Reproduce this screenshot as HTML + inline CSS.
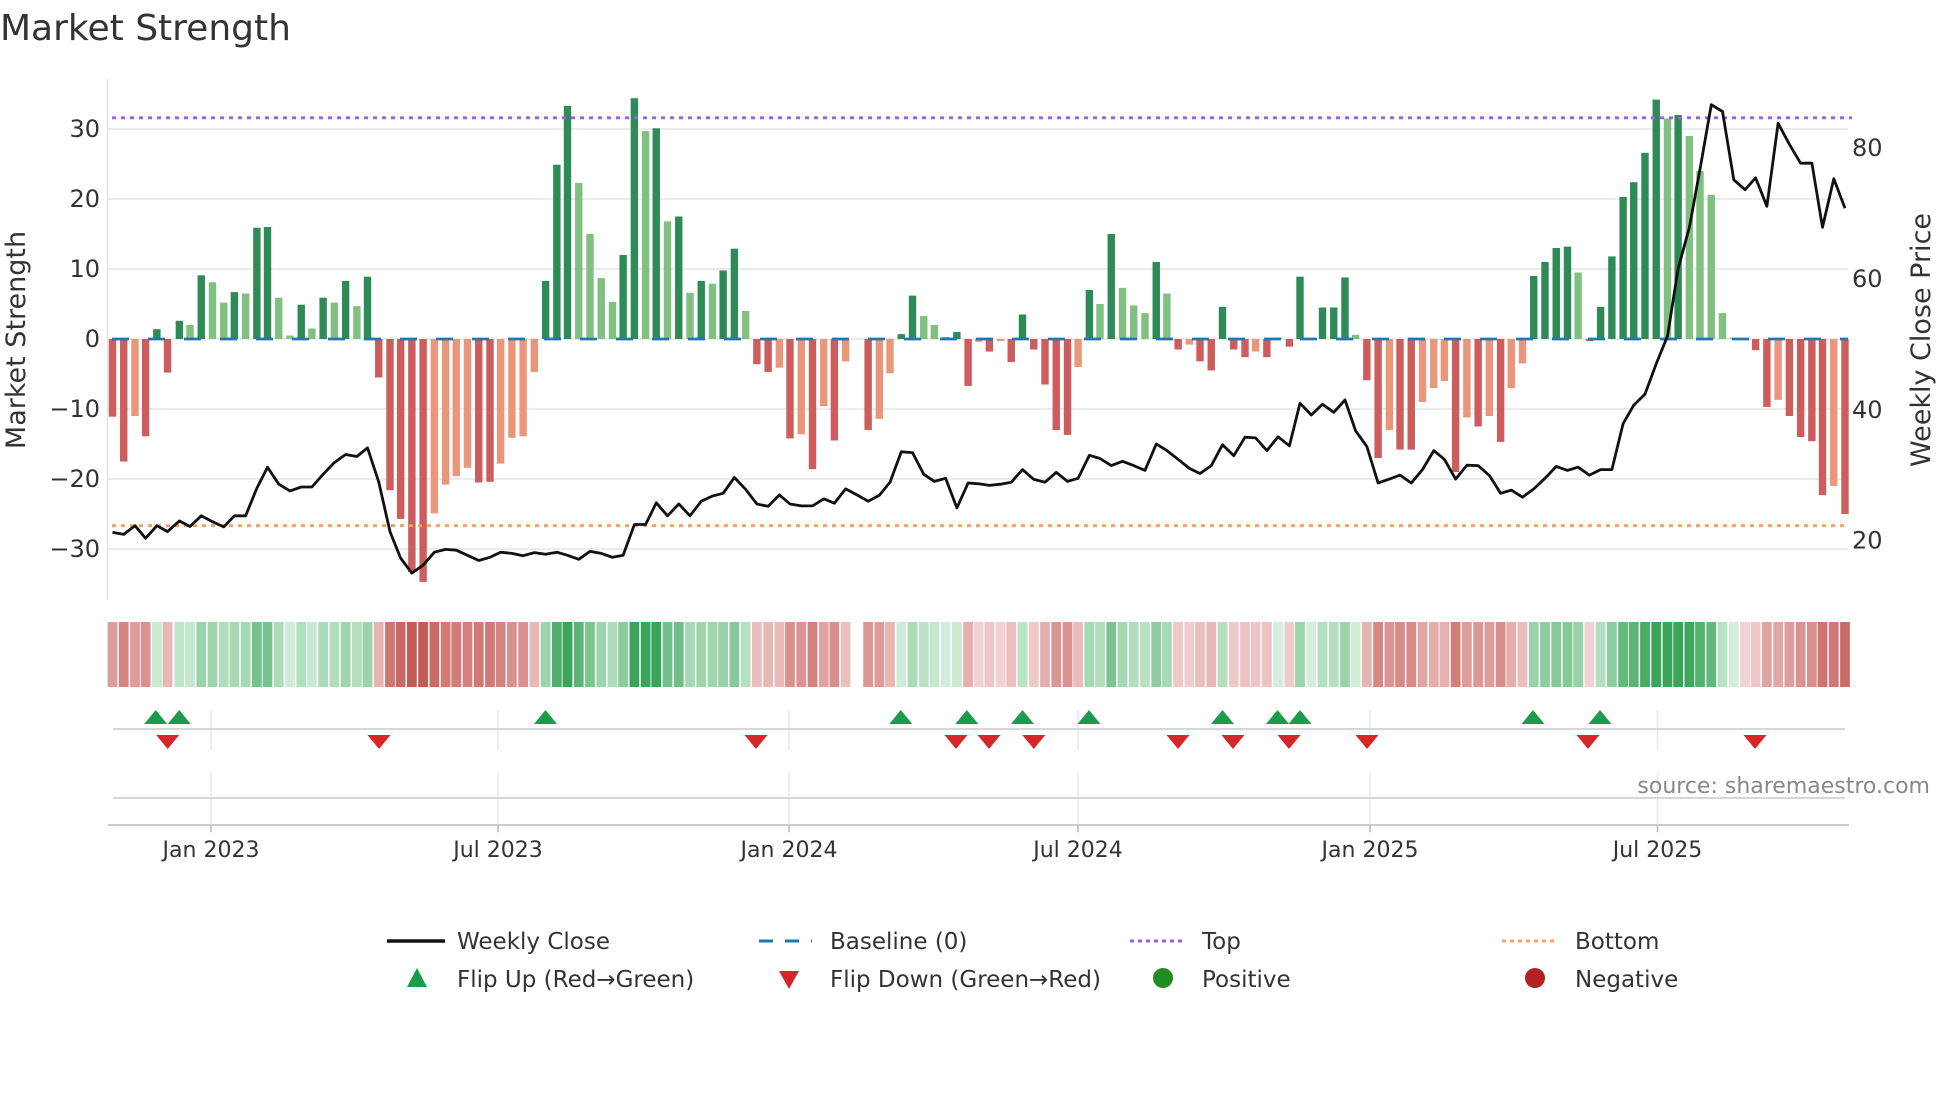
<!DOCTYPE html>
<html><head><meta charset="utf-8"><style>
html,body{margin:0;padding:0;background:#fff;width:1960px;height:1102px;overflow:hidden}
svg{display:block;font-family:"DejaVu Sans","Liberation Sans",sans-serif}
</style></head><body>
<svg id="s" width="1960" height="1102" viewBox="0 0 1960 1102" xmlns="http://www.w3.org/2000/svg">
<text x="0" y="40" font-size="36" fill="#333">Market Strength</text>
<g id="grid" stroke="#ececec" stroke-width="2"></g>
<line x1="107.5" y1="79" x2="107.5" y2="600" stroke="#e2e2e2" stroke-width="1.5"/>
<g id="bars"></g>
<g id="ticks" font-size="24" fill="#333"></g>
<text transform="translate(25,340) rotate(-90)" text-anchor="middle" font-size="27" fill="#333">Market Strength</text>
<text transform="translate(1930,340) rotate(-90)" text-anchor="middle" font-size="27" fill="#333">Weekly Close Price</text>
<g id="strip"></g>
<g id="marks"></g>
<text x="1930" y="801" text-anchor="end" font-size="22" fill="#888" transform="translate(0,-8)">source: sharemaestro.com</text>
<g id="legend" font-size="23" fill="#333">
<line x1="387" y1="941" x2="445" y2="941" stroke="#111" stroke-width="3.5"/>
<text x="457" y="949">Weekly Close</text>
<line x1="759" y1="941" x2="812" y2="941" stroke="#1f77b4" stroke-width="3" stroke-dasharray="14 12"/>
<text x="830" y="949">Baseline (0)</text>
<line x1="1130" y1="941" x2="1185" y2="941" stroke="#9b5fe0" stroke-width="3" stroke-dasharray="4 4"/>
<text x="1202" y="949">Top</text>
<line x1="1502" y1="941" x2="1558" y2="941" stroke="#f4a46a" stroke-width="3" stroke-dasharray="4 4"/>
<text x="1575" y="949">Bottom</text>
<polygon points="417,968 407,987 427,987" fill="#1a9c4a"/>
<text x="457" y="987">Flip Up (Red→Green)</text>
<polygon points="789,989 779,971 799,971" fill="#d62728"/>
<text x="830" y="987">Flip Down (Green→Red)</text>
<circle cx="1163" cy="978" r="10" fill="#228b22"/>
<text x="1202" y="987">Positive</text>
<circle cx="1535" cy="978" r="10" fill="#b22222"/>
<text x="1575" y="987">Negative</text>
</g>
</svg>
<script>
var NS="http://www.w3.org/2000/svg";
function el(p,t,a,txt){var e=document.createElementNS(NS,t);for(var k in a)e.setAttribute(k,a[k]);if(txt!=null)e.textContent=txt;document.getElementById(p).appendChild(e);return e;}
var b1=[[180,-11.1,'r'],[198,-17.5,'r'],[216,-11,'s'],[233,-13.9,'r'],[251,1.4,'d'],[268,-4.8,'r'],[287,2.6,'d'],[304,2,'l'],[322,9.1,'d'],[340,8.1,'l'],[358,5.2,'l'],[375,6.7,'d'],[393,6.5,'l'],[411,15.9,'d'],[428,16,'d'],[446,5.9,'l'],[464,0.5,'l'],[482,4.9,'d'],[499,1.5,'l'],[517,5.9,'d'],[535,5.2,'l'],[553,8.3,'d'],[571,4.7,'l'],[588,8.9,'d'],[606,-5.5,'r'],[624,-21.6,'r'],[641,-25.7,'r'],[659,-33.3,'r'],[677,-34.7,'r'],[695,-24.9,'s'],[713,-20.8,'s'],[730,-19.6,'s'],[748,-18.4,'s'],[766,-20.5,'r'],[784,-20.4,'r'],[801,-17.8,'s'],[819,-14.1,'s'],[837,-13.9,'s'],[855,-4.7,'s'],[873,8.3,'d'],[891,24.9,'d'],[908,33.3,'d'],[926,22.3,'l'],[944,15,'l'],[962,8.7,'l'],[980,5.3,'l'],[997,12,'d'],[1015,34.4,'d'],[1033,29.7,'l'],[1050,30.1,'d'],[1068,16.8,'l'],[1086,17.5,'d'],[1104,6.6,'l'],[1122,8.3,'d'],[1140,7.9,'l'],[1157,9.8,'d'],[1175,12.9,'d'],[1193,4,'l'],[1211,-3.6,'r'],[1229,-4.7,'r'],[1247,-4.1,'s'],[1264,-14.2,'r'],[1282,-13.6,'s'],[1300,-18.6,'r'],[1318,-9.6,'s'],[1335,-14.5,'r'],[1353,-3.2,'s'],[1371,0,'l'],[1389,-13,'r'],[1407,-11.4,'s'],[1424,-4.9,'s'],[1442,0.7,'d'],[1460,6.2,'d'],[1478,3.3,'l'],[1495,2,'l'],[1513,0.3,'l'],[1531,1,'d'],[1549,-6.7,'r'],[1566,-0.4,'s']];
var b2=[[15,-1.8,'r'],[33,-0.3,'s'],[50,-3.3,'r'],[68,3.5,'d'],[86,-1.5,'r'],[104,-6.5,'r'],[122,-13,'r'],[140,-13.7,'r'],[157,-4,'s'],[175,7,'d'],[192,5,'l'],[210,15,'d'],[228,7.3,'l'],[246,4.8,'l'],[264,3.7,'l'],[282,11,'d'],[299,6.5,'l'],[317,-1.5,'r'],[335,-0.8,'s'],[352,-3.2,'r'],[370,-4.5,'r'],[388,4.6,'d'],[406,-1.5,'r'],[424,-2.6,'r'],[441,-1.8,'s'],[459,-2.6,'r'],[477,0.2,'l'],[495,-1.1,'r'],[512,8.9,'d'],[530,0.1,'d'],[548,4.5,'d'],[566,4.5,'d'],[584,8.8,'d'],[601,0.6,'l'],[619,-5.9,'r'],[637,-17,'r'],[655,-13,'s'],[672,-15.8,'r'],[690,-15.8,'r'],[708,-9,'s'],[726,-7,'s'],[743,-6,'s'],[761,-19,'r'],[779,-11.2,'s'],[797,-12.5,'r'],[815,-11,'s'],[833,-14.7,'r'],[850,-7,'s'],[868,-3.5,'s'],[886,9,'d'],[904,11,'d'],[922,13,'d'],[940,13.2,'d'],[957,9.5,'l'],[975,-0.3,'r'],[993,4.6,'d'],[1011,11.8,'d'],[1029,20.3,'d'],[1046,22.4,'d'],[1064,26.6,'d'],[1082,34.2,'d'],[1100,31.5,'l'],[1117,32,'d'],[1135,29,'l'],[1152,24,'l'],[1170,20.6,'l'],[1188,3.7,'l'],[1206,0.2,'l'],[1224,-0.06,'r'],[1241,-1.6,'r'],[1259,-9.7,'r'],[1277,-8.7,'s'],[1295,-11,'r'],[1313,-14,'r'],[1331,-14.6,'r'],[1348,-22.3,'r'],[1366,-21,'s'],[1384,-25,'r']];
var p1=[1347,1352,1330,1362,1330,1345,1318,1332,1305,1320,1333,1305,1305,1235,1182,1225,1242,1232,1232,1200,1170,1150,1155,1133,1220,1345,1412,1450,1430,1397,1390,1392,1405,1418,1410,1397,1400,1406,1398,1402,1397,1405,1415,1395,1400,1410,1405,1327,1327,1272,1305,1275,1305,1268,1255,1248,1208,1238,1275,1281,1252,1275,1280,1280,1262,1273,1237,1252,1268,1253,1220,1143,1145,1200,1218,1210,1285,1222,1224];
var p2=[1228,1225,1220,1188,1213,1220,1195,1218,1210,1152,1160,1178,1167,1178,1190,1123,1140,1162,1185,1198,1178,1125,1153,1106,1108,1140,1105,1128,1020,1050,1023,1043,1012,1090,1130,1222,1212,1202,1222,1188,1140,1162,1212,1177,1178,1203,1248,1240,1258,1237,1210,1180,1190,1182,1202,1188,1188,1072,1025,997,920,850,680,575,428,265,282,455,480,450,522,312,365,413,413,575,452,527];
var bars=[],py=[];
b1.forEach(function(b){bars.push([b[0]/1.6,b[1],b[2]]);});
b2.forEach(function(b){bars.push([980+b[0]/1.6,b[1],b[2]]);});
p1.forEach(function(v){py.push(v/2.53);});p2.forEach(function(v){py.push(v/2.53);});
var Y0=339,K=7.0;
[-30,-20,-10,10,20,30].forEach(function(v){el('grid','line',{x1:108,x2:1848,y1:Y0-v*K,y2:Y0-v*K});});
el('grid','line',{x1:108,x2:1848,y1:Y0,y2:Y0});
[-30,-20,-10,0,10,20,30].forEach(function(v){el('ticks','text',{x:100,y:Y0-v*K+8,'text-anchor':'end'},(v<0?'\u2212'+(-v):''+v));});
[20,40,60,80].forEach(function(p){el('ticks','text',{x:1852,y:540.7-(p-20)*6.545+8},''+p);});
var col={d:'#2e8b57',l:'#80c080',r:'#cd5c5c',s:'#e9967a'};
bars.forEach(function(b){var v=b[1];if(Math.abs(v)<0.05)return;var h=Math.abs(v)*K;el('bars','rect',{x:b[0]-3.7,width:7.4,y:v>0?Y0-h:Y0,height:h,fill:col[b[2]]});});
el('bars','line',{x1:112,x2:1848,y1:Y0,y2:Y0,stroke:'#1f77b4','stroke-width':2.8,'stroke-dasharray':'17 19'});
el('bars','line',{x1:112,x2:1852,y1:117.8,y2:117.8,stroke:'#9b5fe0','stroke-width':2.8,'stroke-dasharray':'4 5'});
el('bars','line',{x1:112,x2:1848,y1:525.7,y2:525.7,stroke:'#f0a060','stroke-width':2.8,'stroke-dasharray':'4 5'});
var d='';for(var i=0;i<bars.length&&i<py.length;i++){d+=(i?'L':'M')+bars[i][0].toFixed(1)+' '+py[i].toFixed(1);}
el('bars','path',{d:d,fill:'none',stroke:'#111','stroke-width':2.8,'stroke-linejoin':'round'});
function mix(a,b,t){var r=[0,1,2].map(function(k){return Math.round(a[k]+(b[k]-a[k])*t);});return 'rgb('+r.join(',')+')';}
bars.forEach(function(b,i){var v=b[1];if(Math.abs(v)<0.01)return;var t=Math.min(Math.abs(v)/30,1);t=Math.pow(t,0.8);
var c=v>0?mix([214,239,220],[58,165,90],t):mix([242,212,212],[196,90,85],t);
el('strip','rect',{x:b[0]-4.9,width:9.8,y:622,height:65,fill:c});});
[211,498,789,1078,1370,1657.5].forEach(function(x){el('marks','line',{x1:x,x2:x,y1:710,y2:750,stroke:'#e6e9ee','stroke-width':1.5});el('marks','line',{x1:x,x2:x,y1:772,y2:833,stroke:'#e6e9ee','stroke-width':1.5});});
el('marks','line',{x1:113,x2:1845,y1:729,y2:729,stroke:'#d4d6da','stroke-width':2});
el('marks','line',{x1:113,x2:1845,y1:798,y2:798,stroke:'#d4d6da','stroke-width':2});
el('marks','line',{x1:108,x2:1849,y1:825,y2:825,stroke:'#ccc','stroke-width':2});
[[211,'Jan 2023'],[498,'Jul 2023'],[789,'Jan 2024'],[1078,'Jul 2024'],[1370,'Jan 2025'],[1657.5,'Jul 2025']].forEach(function(t){el('marks','line',{x1:t[0],x2:t[0],y1:825,y2:832,stroke:'#bbb','stroke-width':1.5});el('marks','text',{x:t[0],y:867,'text-anchor':'middle','font-size':22,fill:'#333',transform:'translate(0,-10)'},t[1]);});
[155.7,179.2,545.5,900.8,966.8,1022.5,1089,1222.5,1277.5,1300,1533,1600].forEach(function(x){el('marks','polygon',{points:(x)+',710 '+(x-11.5)+',724 '+(x+11.5)+',724',fill:'#1a9c4a'});});
[167.7,379,756,956,989,1033.8,1178,1233,1289,1367,1588,1755].forEach(function(x){el('marks','polygon',{points:(x-11.5)+',735 '+(x+11.5)+',735 '+x+',749',fill:'#d62728'});});
</script>
</body></html>
